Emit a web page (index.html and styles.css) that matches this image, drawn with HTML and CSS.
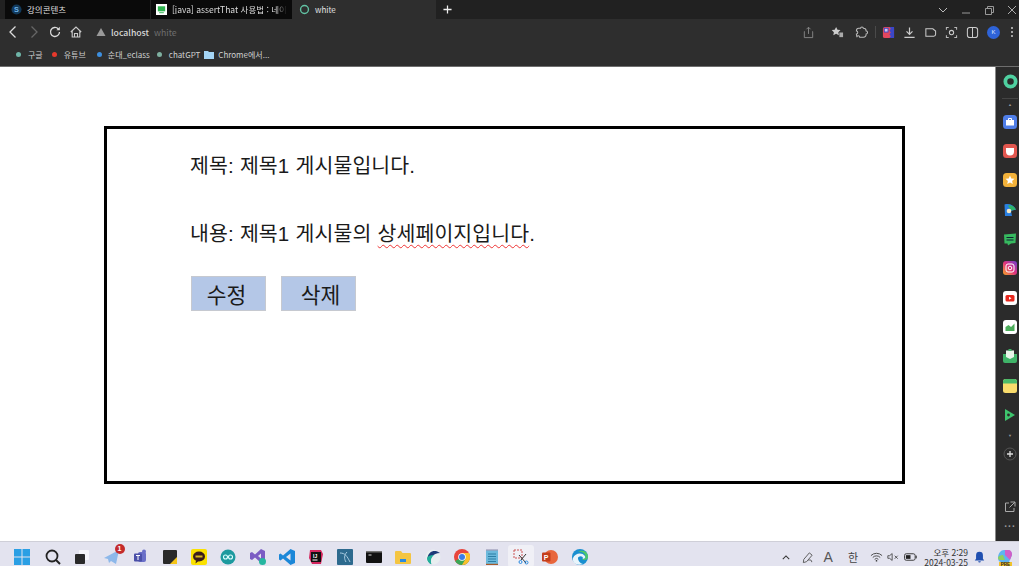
FILE: index.html
```html
<!DOCTYPE html>
<html lang="ko">
<head>
<meta charset="utf-8">
<title>white</title>
<link rel="stylesheet" href="styles.css">
</head>
<body>
<div class="window">
  <header class="chrome">
    <div class="tabstrip">
      <div class="tab tab-first">
        <svg class="fav" viewBox="0 0 12 12"><circle cx="6" cy="6" r="5.500" fill="#123a5c"/><text x="6" y="9" class="fav-s">S</text></svg>
        <span class="tab-title">강의콘텐츠</span>
      </div>
      <div class="tab tab-second">
        <svg class="fav" viewBox="0 0 12 12"><rect width="12" height="12" fill="#fff"/><rect x="2" y="2.500" width="8" height="5.500" fill="#2fb350"/><rect x="3.500" y="9" width="5" height="1" fill="#2fb350"/></svg>
        <span class="tab-title tab-fade">[java] assertThat 사용법 : 네이</span>
      </div>
      <div class="tab tab-active">
        <svg class="fav" viewBox="0 0 12 12"><circle cx="6" cy="6" r="4.300" fill="none" stroke="#62c3a4" stroke-width="1.500"/></svg>
        <span class="tab-title">white</span>
      </div>
      <div class="tab-rest">
        <svg class="newtab" viewBox="0 0 10 10"><path d="M5 .5v9M.5 5h9" stroke="#eee" stroke-width="1.400"/></svg>
        <div class="win-controls">
          <svg class="ctl" viewBox="0 0 12 12"><path d="M2 4l4 4 4-4" fill="none" stroke="#bbb" stroke-width="1"/></svg>
          <svg class="ctl" viewBox="0 0 12 12"><path d="M2 9h8" stroke="#999" stroke-width="1"/></svg>
          <svg class="ctl" viewBox="0 0 12 12"><path d="M2.500 4.500h6v6h-6zM4.500 4.500v-2h6v6h-2" fill="none" stroke="#999" stroke-width="1"/></svg>
          <svg class="ctl" viewBox="0 0 12 12"><path d="M2 2l8 8M10 2l-8 8" stroke="#aaa" stroke-width="1"/></svg>
        </div>
      </div>
    </div>
    <div class="toolbar">
      <div class="nav">
        <svg class="tool" viewBox="0 0 14 14"><path d="M9.500 1.500L4 7l5.500 5.500" fill="none" stroke="#ddd" stroke-width="1.300"/></svg>
        <svg class="tool" viewBox="0 0 14 14"><path d="M4.500 1.500L10 7l-5.500 5.500" fill="none" stroke="#666" stroke-width="1.300"/></svg>
        <svg class="tool" viewBox="0 0 14 14"><path d="M11.500 7a4.500 4.500 0 1 1-1.300-3.200" fill="none" stroke="#ddd" stroke-width="1.300"/><path d="M11.800 1.800v3.400H8.400z" fill="#ddd"/></svg>
        <svg class="tool" viewBox="0 0 14 14"><path d="M1.800 7L7 2l5.200 5M3.200 6v6h7.600V6M5.500 12V8.500h3V12" fill="none" stroke="#ccc" stroke-width="1.100"/></svg>
      </div>
      <svg class="warn" viewBox="0 0 10 10"><path d="M5 1l4.500 8h-9z" fill="#999"/></svg>
      <span class="url-host">localhost</span>
      <span class="url-title">white</span>
      <div class="tool-right">
        <svg class="act act-share" viewBox="0 0 14 14"><path d="M3 6H2.500v6.500h9V6H11M7 8.500V1.500M4.800 3.500L7 1.300l2.200 2.200" fill="none" stroke="#888" stroke-width="1"/></svg>
        <svg class="act act-star" viewBox="0 0 14 14"><path d="M5.500 1l1.500 3 3.200.4-2.300 2.300.6 3.300-3-1.600-3 1.600.6-3.300L.8 4.400 4 4z" fill="#ccc"/><path d="M9 7h4v5H9z" fill="#aaa"/></svg>
        <svg class="act act-puzzle" viewBox="0 0 14 14"><path d="M4 2.500h2a1.500 1.500 0 0 1 3 0c2 0 3 1 3 3a1.500 1.500 0 0 1 0 3c0 2-1 3.500-3 3.500H5a1.500 1.500 0 0 0-3 0c0-2-.5-2-.5-3.500a1.500 1.500 0 0 0 0-3C1.500 4 2.500 2.500 4 2.500z" fill="none" stroke="#bbb" stroke-width="1.100"/></svg>
        <span class="divider"></span>
        <svg class="act act-flag" viewBox="0 0 14 14"><rect x="1" y="1" width="12" height="12" rx="2" fill="#e4475e"/><path d="M8 1h5v12H8l1.500-2L8 9l1.500-2L8 5l1.500-2z" fill="#3b47c8"/><rect x="2" y="2" width="5" height="5" fill="#3b47c8"/><rect x="3" y="3" width="3" height="3" fill="#d9c4e8"/></svg>
        <svg class="act" viewBox="0 0 14 14"><path d="M7 1.500V8.500M3.800 5.800L7 9l3.200-3.200M1.500 12.300h11" fill="none" stroke="#ccc" stroke-width="1.300"/></svg>
        <svg class="act" viewBox="0 0 14 14"><path d="M2 3h7.500l3 2.500V9c0 1-.8 2-2 2H2z" fill="none" stroke="#ccc" stroke-width="1.100"/></svg>
        <svg class="act" viewBox="0 0 14 14"><path d="M1.500 4V1.500H4M10 1.500h2.500V4M12.500 10v2.500H10M4 12.500H1.500V10" fill="none" stroke="#bbb" stroke-width="1.100"/><circle cx="7" cy="7" r="2.300" fill="none" stroke="#ccc" stroke-width="1.100"/></svg>
        <svg class="act" viewBox="0 0 14 14"><rect x="1.500" y="1.500" width="11" height="11" rx="2.500" fill="none" stroke="#ccc" stroke-width="1.100"/><path d="M7 1.500v11" stroke="#ccc" stroke-width="1.100"/></svg>
        <span class="avatar">K</span>
        <svg class="menu-dots" viewBox="0 0 4 12"><circle cx="2" cy="2" r="1" fill="#ccc"/><circle cx="2" cy="6" r="1" fill="#ccc"/><circle cx="2" cy="10" r="1" fill="#ccc"/></svg>
      </div>
    </div>
    <div class="bookmarks">
      <span class="bm"><i class="dot dot-teal"></i>구글</span>
      <span class="bm bm-tube"><i class="dot dot-red"></i>유튜브</span>
      <span class="bm bm-eclass"><i class="dot dot-blue"></i>순대_eclass</span>
      <span class="bm bm-gpt"><i class="dot dot-sage"></i>chatGPT</span>
      <span class="bm bm-folder"><svg class="folder" viewBox="0 0 10 8"><path d="M0 0h4l1 1h5v7H0z" fill="#a5d5f5"/></svg>Chrome에서...</span>
    </div>
  </header>
  <div class="main">
    <main class="page">
      <section class="card">
        <p class="line line-title">제목: 제목1 게시물입니다.</p>
        <p class="line line-body">내용: 제목1 게시물의 <span class="misspelt">상세페이지입니다</span>.</p>
        <div class="actions">
          <button class="btn btn-edit">수정</button>
          <button class="btn btn-del">삭제</button>
        </div>
      </section>
    </main>
    <aside class="sidebar">
      <svg class="side side-top" viewBox="0 0 16 16"><circle cx="8" cy="8" r="5.500" fill="none" stroke="#4fd0a0" stroke-width="4"/></svg>
      <span class="side-rule"></span>
      <span class="side-caret">▲</span>
      <svg class="side" viewBox="0 0 14 14"><rect width="14" height="14" rx="3.500" fill="#4f7ee8"/><path d="M3 5h8v5.500H3z" fill="#fff"/><path d="M5.500 5V3.500h3V5" fill="none" stroke="#fff"/></svg>
      <svg class="side" viewBox="0 0 14 14"><rect width="14" height="14" rx="3.500" fill="#e2574f"/><path d="M3 4h8v3.500a4 4 0 0 1-8 0z" fill="#fff"/></svg>
      <svg class="side" viewBox="0 0 14 14"><rect width="14" height="14" rx="3.500" fill="#f3b23a"/><path d="M7 2.500l1.300 3 3.200.3-2.400 2.100.7 3.200L7 9.400l-2.800 1.700.7-3.200-2.400-2.100 3.200-.3z" fill="#fff"/></svg>
      <svg class="side" viewBox="0 0 14 14"><path d="M1.500 1.500C6 0 11 2 13 6.500L8 8l1 5H2z" fill="#2a7fe0"/><path d="M5 2.500c3-.8 6 .8 8 4L8 7.500z" fill="#2fb56a"/><circle cx="6" cy="8" r="2.300" fill="#f4e8c8"/></svg>
      <svg class="side" viewBox="0 0 14 14"><path d="M1 2.500l12-1-.5 9.500-4.500.5L5 13.500l-.5-2-3 0z" fill="#37b95f"/><rect x="3.500" y="5" width="7" height="1" fill="#123"/><rect x="3.500" y="7.500" width="7" height="1" fill="#123"/></svg>
      <svg class="side" viewBox="0 0 14 14"><defs><linearGradient id="ig" x1="0" y1="1" x2="1" y2="0"><stop offset="0" stop-color="#f9a825"/><stop offset=".5" stop-color="#e0337e"/><stop offset="1" stop-color="#6a3fd0"/></linearGradient></defs><rect width="14" height="14" rx="3" fill="url(#ig)"/><rect x="3" y="3" width="8" height="8" rx="2" fill="none" stroke="#fff"/><circle cx="7" cy="7" r="1.800" fill="none" stroke="#fff"/></svg>
      <svg class="side" viewBox="0 0 14 14"><rect width="14" height="14" rx="3" fill="#fff"/><rect x="2.500" y="4" width="9" height="6.500" rx="1.500" fill="#e8281e"/><path d="M6 5.700l2.500 1.500L6 8.800z" fill="#fff"/></svg>
      <svg class="side" viewBox="0 0 14 14"><rect width="14" height="14" rx="3" fill="#fff"/><path d="M2.500 11V7l3-2 2.500 2 3.500-3.500V11z" fill="#4cae5b"/></svg>
      <svg class="side" viewBox="0 0 14 14"><path d="M0 5h14v7a2 2 0 0 1-2 2H2a2 2 0 0 1-2-2z" fill="#3fb368"/><path d="M3 1.500h8v6.500l-4 2-4-2z" fill="#e8f4e8"/><rect x="5.500" y="0" width="3" height="2" fill="#3fb368"/></svg>
      <svg class="side" viewBox="0 0 14 14"><rect width="14" height="14" rx="2.500" fill="#f9dc6c"/><path d="M0 4.500V2.500A2.500 2.500 0 0 1 2.500 0h9A2.500 2.500 0 0 1 14 2.500v2z" fill="#4cbb6a"/></svg>
      <svg class="side" viewBox="0 0 14 14"><path d="M2 1l10 6-10 6z" fill="#3ec46d"/><circle cx="5.500" cy="7" r="1.400" fill="#2b2b2b"/></svg>
      <span class="side-caret side-caret-down">▼</span>
      <svg class="side side-plus" viewBox="0 0 14 14"><circle cx="7" cy="7" r="6" fill="none" stroke="#555"/><path d="M7 4v6M4 7h6" stroke="#ddd" stroke-width="1.300"/></svg>
      <svg class="side side-open" viewBox="0 0 12 12"><path d="M5 2H1.500v8.500H10V7M6.500 1h4.500v4.500M11 1L5.500 6.500" fill="none" stroke="#aaa"/></svg>
      <span class="side-more">···</span>
    </aside>
  </div>
  <footer class="taskbar">
    <svg class="ti" viewBox="0 0 16 16"><path d="M0 0h7.500v7.500H0zM8.500 0H16v7.500H8.500zM0 8.500h7.500V16H0zM8.500 8.500H16V16H8.500z" fill="#2b9fe4"/></svg>
    <svg class="ti ti-search" viewBox="0 0 16 16"><circle cx="7" cy="7" r="5.500" fill="none" stroke="#222" stroke-width="1.800"/><path d="M11 11l4 4" stroke="#222" stroke-width="2"/></svg>
    <svg class="ti" viewBox="0 0 16 16"><rect x="5" y="1" width="10" height="10" rx="1" fill="#f6f6fa"/><rect x="1" y="5" width="10" height="10" rx="1" fill="#2a2a2a"/></svg>
    <span class="ti-badged">
      <svg class="ti" viewBox="0 0 16 16"><path d="M0 9L15 1l-3 14-5-3-2 2-1-4z" fill="#8db8ea"/></svg>
      <span class="badge">1</span>
    </span>
    <svg class="ti" viewBox="0 0 16 16"><rect x="5" y="3" width="8" height="10" rx="2" fill="#6a6fc8"/><rect x="1" y="4.500" width="8" height="8" rx="1" fill="#4a4fa8"/><path d="M3 6.500h4M5 6.500v4.500" stroke="#fff"/><circle cx="11" cy="2.500" r="2" fill="#6a6fc8"/></svg>
    <svg class="ti" viewBox="0 0 16 16"><rect x="1" y="1" width="14" height="14" rx="1" fill="#2a2a2a"/><path d="M15 8v7H8z" fill="#f5c518"/></svg>
    <svg class="ti" viewBox="0 0 16 16"><rect width="16" height="16" rx="2" fill="#fae100"/><ellipse cx="8" cy="7.500" rx="6" ry="5" fill="#3a1d1d"/><path d="M5 11.500l-.5 3 3-2.500z" fill="#3a1d1d"/><rect x="4.500" y="6.500" width="7" height="2" fill="#d8b820"/></svg>
    <svg class="ti" viewBox="0 0 16 16"><circle cx="8" cy="8" r="7.500" fill="#1d9a9f"/><circle cx="5.500" cy="8" r="2" fill="none" stroke="#dff" stroke-width="1.100"/><circle cx="10.500" cy="8" r="2" fill="none" stroke="#dff" stroke-width="1.100"/></svg>
    <svg class="ti" viewBox="0 0 16 16"><path d="M11 0l4 2v10l-4 2L5 8.500 2 11 0 10V4l2-1 3 2.500z" fill="#7b5cc4"/><path d="M11 4.500L8 7l3 2.500z" fill="#e4e4ee"/><circle cx="12.500" cy="12.500" r="3.500" fill="#25b6a0"/></svg>
    <svg class="ti" viewBox="0 0 16 16"><path d="M11.500 0L16 2v12l-4.500 2L4 9.500 1.500 11.500 0 10.500V5.500L1.500 4.500 4 6.500z" fill="#1b87d8"/><path d="M11.500 4.500L7 8l4.500 3.500z" fill="#e4e4ee"/></svg>
    <svg class="ti" viewBox="0 0 16 16"><path d="M2 1h11l2 4-2 10H4L1 9z" fill="#d4265e"/><path d="M3 3h10v10H3z" fill="#111"/><rect x="4.500" y="10.500" width="5" height="1" fill="#fff"/><text x="5" y="8.500" class="ij">IJ</text></svg>
    <svg class="ti" viewBox="0 0 16 16"><rect width="16" height="16" rx="1" fill="#2d6a8e"/><path d="M3 4c5 0 7 3 10 9M10 3c-3 3-3 7-1 10" fill="none" stroke="#a8cbe0"/></svg>
    <svg class="ti" viewBox="0 0 16 16"><rect y="2" width="16" height="12" rx="1" fill="#111"/><rect y="2" width="16" height="1.500" fill="#777"/><path d="M2.500 6h3" stroke="#ddd"/></svg>
    <svg class="ti" viewBox="0 0 16 16"><path d="M0 3a1 1 0 0 1 1-1h5l1.500 2H15a1 1 0 0 1 1 1v9a1 1 0 0 1-1 1H1a1 1 0 0 1-1-1z" fill="#f4c542"/><rect x="5" y="10" width="6" height="3" fill="#2a8ae0"/></svg>
    <svg class="ti" viewBox="0 0 16 16"><circle cx="8" cy="8" r="7.500" fill="#e8eef0"/><path d="M15 4C10 0 3 2 2.500 9.500 2.500 12 4 14 6 15 4 9 8 4 15 4z" fill="#1c3b78"/><path d="M2 9c0 3 2 5.500 4.500 6.300C5 11 6.500 8 9 6 5 6 3 7 2 9z" fill="#20b09a"/></svg>
    <svg class="ti" viewBox="0 0 16 16"><circle cx="8" cy="8" r="8" fill="#e8453c"/><path d="M8 8L1.100 12A8 8 0 0 0 8 16a8 8 0 0 0 6.900-4z" fill="#3aa757"/><path d="M8 4h7A8 8 0 0 1 8 16l3.500-6z" fill="#fbc02d"/><circle cx="8" cy="8" r="3.800" fill="#fff"/><circle cx="8" cy="8" r="3" fill="#3b7de8"/></svg>
    <svg class="ti ti-notes" viewBox="0 0 16 16"><rect x="2" y="1.500" width="12" height="14" fill="#6cb9dc"/><path d="M4 5h8M4 7.500h8M4 10h8M4 12.500h8" stroke="#2d7ea5"/><path d="M3 1.500v-1M5 1.500v-1M7 1.500v-1M9 1.500v-1M11 1.500v-1M13 1.500v-1" stroke="#336"/><rect x="2" y="14.800" width="12" height="1.200" fill="#a55a2a"/></svg>
    <span class="ti-active">
      <svg class="ti" viewBox="0 0 16 16"><rect x="1" y="1" width="8" height="8" fill="none" stroke="#c55" stroke-dasharray="2 1"/><path d="M6 6l7 8M13 5l-5 6" stroke="#333"/><circle cx="13.500" cy="13.500" r="1.500" fill="none" stroke="#2a8ae0"/><circle cx="7.500" cy="13" r="1.500" fill="none" stroke="#2a8ae0"/></svg>
    </span>
    <svg class="ti" viewBox="0 0 16 16"><circle cx="9" cy="8" r="7" fill="#e8663c"/><rect x="0" y="3.500" width="8.500" height="9" rx="1" fill="#c43e1c"/><text x="4.200" y="10.700" class="ppt">P</text></svg>
    <svg class="ti" viewBox="0 0 16 16"><circle cx="8" cy="8" r="8" fill="#1a8fd0"/><path d="M1 9c2-5 9-6 12-2 1 2 0 3-2.500 3C12 8 9 6 6.500 8 5 9.500 7 14 11 15 5 17 0 14 1 9z" fill="#fff" fill-opacity=".9"/><path d="M16 8c0 1-1 3-3.500 3-1 0-2-.3-2.500-1 1 .3 3 0 3.500-1.500C14 6 11 2 6 3c3-2.500 10-1.500 10 5z" fill="#4ec86a"/></svg>
    <div class="tray">
      <svg class="tray-chev" viewBox="0 0 10 6"><path d="M1 5l4-4 4 4" fill="none" stroke="#333" stroke-width="1.300"/></svg>
      <svg class="tray-pen" viewBox="0 0 14 14"><path d="M3 9l6-7 3 2.500-6 7-3.500 1zM8 10c2-1 4 0 3.500 2" fill="none" stroke="#555"/></svg>
      <span class="tray-a">A</span>
      <span class="tray-han">한</span>
      <svg class="tray-wifi" viewBox="0 0 14 10"><path d="M1 3.500a8.500 8.500 0 0 1 12 0M3 5.500a5.500 5.500 0 0 1 8 0M5 7.500a2.800 2.800 0 0 1 4 0" fill="none" stroke="#444"/><circle cx="7" cy="9" r=".9" fill="#333"/></svg>
      <svg class="tray-vol" viewBox="0 0 14 10"><path d="M1 3.500h2L6 1v8L3 6.500H1z" fill="none" stroke="#444"/><path d="M9 3.500l3.500 3.500M12.500 3.500L9 7" stroke="#444"/></svg>
      <svg class="tray-bat" viewBox="0 0 14 10"><rect x=".5" y="1.500" width="11.500" height="7" rx="2" fill="none" stroke="#333"/><rect x="2" y="3" width="5" height="4" fill="#222"/><rect x="12.500" y="3.500" width="1.200" height="3" fill="#333"/></svg>
      <div class="clock"><span>오후 2:29</span><span>2024-03-25</span></div>
      <svg class="tray-bell" viewBox="0 0 12 14"><path d="M6 1a4 4 0 0 1 4 4v4l1.500 2H.5L2 9V5a4 4 0 0 1 4-4z" fill="#1f4fb0"/><path d="M4.500 12h3a1.500 1.500 0 0 1-3 0z" fill="#1f4fb0"/></svg>
      <span class="copilot">
        <svg class="tray-cop" viewBox="0 0 16 16"><path d="M1 9c0-5 3-8 6-8h3c3 0 5 2 5 5l-3 7H4c-2 0-3-2-3-4z" fill="#5fb3f0"/><path d="M8 1h3c3 0 4 2 4 5l-2 5-5-5z" fill="#d05fc8"/><path d="M1 9c0-2 3-3 5-3l2 5H3c-1 0-2-1-2-2z" fill="#8cd060"/></svg>
        <span class="pre">PRE</span>
      </span>
    </div>
  </footer>
</div>
</body>
</html>
```
FILE: styles.css
```css
* { box-sizing: border-box; }
html, body { margin: 0; height: 100%; overflow: hidden; }
body { font-family: "Noto Sans CJK KR", "Noto Sans", sans-serif; background: #fff; }
svg { display: block; flex: none; }
.window { width: 1019px; height: 566px; display: flex; flex-direction: column; }

/* browser chrome */
.chrome { height: 67px; flex: none; background: #2e2e2e; border-bottom: 1px solid #6e6e6e; color: #ddd; }
.tabstrip { height: 19px; display: flex; background: #212121; }
.tab { height: 19px; display: flex; align-items: center; font-size: 8.500px; line-height: 1; white-space: nowrap; overflow: hidden; }
.tab-first { width: 145px; padding-left: 6px; gap: 5px; margin-left: 5px; background: #0a0a0a; }
.tab-second { width: 142px; padding-left: 5px; gap: 5px; background: #0a0a0a; border-left: 1px solid #222; }
.tab-active { width: 144px; padding-left: 7px; gap: 5px; background: #2e2e2e; color: #e4e4e4; font-size: 8px; }
.fav { width: 11px; height: 11px; }
.fav-s { font: bold 8px "Liberation Sans", sans-serif; fill: #6fb2e8; text-anchor: middle; }
.tab-fade { -webkit-mask-image: linear-gradient(90deg, #000 90%, transparent); mask-image: linear-gradient(90deg, #000 90%, transparent); }
.tab-rest { flex: 1; display: flex; align-items: center; padding-left: 7px; }
.newtab { width: 9px; height: 9px; }
.win-controls { margin-left: auto; display: flex; align-items: center; gap: 11px; padding-right: 1px; }
.ctl { width: 12px; height: 12px; }

.toolbar { height: 26px; display: flex; align-items: center; padding-left: 6px; font-size: 8.700px; }
.nav { display: flex; gap: 7px; }
.tool { width: 14px; height: 14px; }
.warn { width: 10px; height: 10px; margin-left: 13px; }
.url-host { margin-left: 5px; color: #d8d8d8; font-weight: 500; }
.url-title { margin-left: 5px; color: #6f6f6f; }
.tool-right { margin-left: auto; display: flex; align-items: center; gap: 8px; padding-right: 5px; }
.act { width: 13px; height: 13px; }
.act-share { margin-right: 8px; }
.act-star { margin-right: 3px; }
.divider { width: 1px; height: 12px; background: #4a4a4a; margin: 0 -1.500px; }
.avatar { width: 13px; height: 13px; border-radius: 50%; background: #2e63d8; color: #dfe8ff; font: 6px/13px "Liberation Sans", sans-serif; text-align: center; }
.menu-dots { width: 4px; height: 12px; margin-left: 2px; }

.bookmarks { height: 21px; display: flex; align-items: center; gap: 8px; padding: 0 0 2px 16px; font-size: 8px; color: #d0d0d0; }
.bm { display: flex; align-items: center; gap: 7px; white-space: nowrap; }
.bm-tube { margin-left: 1px; }
.bm-eclass { margin-left: 3px; gap: 6px; }
.bm-gpt { margin-left: -1px; }
.bm-folder { margin-left: -4px; }
.dot { width: 5px; height: 5px; border-radius: 50%; }
.dot-teal { background: #6fb5a8; }
.dot-red { background: #e6392c; }
.dot-blue { background: #3d8fe0; }
.dot-sage { background: #7fb0a0; }
.folder { width: 10px; height: 8px; margin-right: -3px; }

/* page */
.main { flex: 1; display: flex; min-height: 0; }
.page { flex: 1; background: #fff; padding: 59px 0 0 104px; }
.card { width: 801px; height: 358px; border: 3.500px solid #000; padding: 0 0 0 83px; font-family: "Liberation Sans", "Noto Sans CJK KR", sans-serif; color: #1a1a1a; }
.line { margin: 0; font-size: 20.500px; line-height: 30px; white-space: nowrap; letter-spacing: .08px; word-spacing: .5px; }
.line-title { padding-top: 22px; }
.line-body { margin-top: 38px; }
.misspelt { text-decoration: underline wavy #e33; text-decoration-thickness: 1px; text-underline-offset: 3px; }
.actions { display: flex; gap: 15px; margin: 27px 0 0 1px; }
.btn { width: 75px; height: 35px; padding: 0; background: #b4c7e7; border: 1px solid #c6c9d0; font: 21.500px/1 "Noto Sans CJK KR", sans-serif; color: #1a1a1a; }
.btn-edit { padding-right: 4px; }
.btn-del { padding-left: 4px; }

/* sidebar */
.sidebar { width: 24px; flex: none; background: #2b2b2b; border-left: 1px solid #8a8a8a; display: flex; flex-direction: column; align-items: center; padding: 7px 0 0 5px; gap: 15.300px; }
.side { width: 14px; height: 14px; }
.side-top { width: 15px; height: 15px; }
.side-rule { width: 16px; height: 1px; background: #444; margin: -6px 0 -12px; }
.side-caret { font: 4px/4px "Liberation Sans", sans-serif; color: #999; margin: 0 0 -7px; }
.side-caret-down { margin: -3px 0 -4px; }
.side-plus { margin-top: -2px; }
.side-open { width: 12px; height: 12px; margin-top: 24px; }
.side-more { font: bold 10px/6px "Liberation Sans", sans-serif; color: #999; margin-top: -4px; letter-spacing: .5px; }

/* taskbar */
.taskbar { height: 25px; flex: none; display: flex; align-items: center; gap: 13.200px; padding: 6px 0 0 14px; background: #e3e3ef; border-top: 1px solid #cfcfd8; }
.ti { width: 16px; height: 16px; }
.ti-search { margin-left: 2px; }
.ti-notes { margin-left: 1px; }
.ti-badged { position: relative; display: block; }
.badge { position: absolute; top: -5px; right: -5px; width: 10px; height: 10px; border-radius: 50%; background: #c42b2b; color: #fff; font: bold 7px/10px "Liberation Sans", sans-serif; text-align: center; }
.ij { font: bold 5px "Liberation Sans", sans-serif; fill: #fff; }
.ppt { font: bold 7px "Liberation Sans", sans-serif; fill: #fff; text-anchor: middle; }
.ti-active { display: flex; align-items: center; justify-content: center; width: 26px; height: 22px; margin: -3px -5px 0; padding-top: 3px; background: #f0f0f6; border-radius: 3px; }
.tray { margin-left: auto; display: flex; align-items: center; color: #333; }
.tray-chev { width: 8px; height: 5px; }
.tray-pen { width: 13px; height: 13px; margin-left: 11px; }
.tray-a { font: 14px/1 "Liberation Sans", sans-serif; margin-left: 10px; color: #555; }
.tray-han { font-size: 11px; line-height: 1; margin-left: 15px; color: #444; }
.tray-wifi { width: 13px; height: 10px; margin-left: 12px; }
.tray-vol { width: 12px; height: 10px; margin-left: 4px; }
.tray-bat { width: 13px; height: 10px; margin-left: 5px; }
.clock { display: flex; flex-direction: column; align-items: flex-end; width: 44px; margin-left: 7px; font-size: 8.500px; line-height: 10px; color: #333; white-space: nowrap; }
.tray-bell { width: 11px; height: 12px; margin-left: 6px; }
.copilot { position: relative; display: block; margin: 0 6px 0 12px; }
.tray-cop { width: 16px; height: 16px; }
.pre { position: absolute; left: 2px; bottom: -2px; width: 13px; background: #f3c32c; color: #222; font: bold 4.500px/5px "Liberation Sans", sans-serif; text-align: center; }
```
